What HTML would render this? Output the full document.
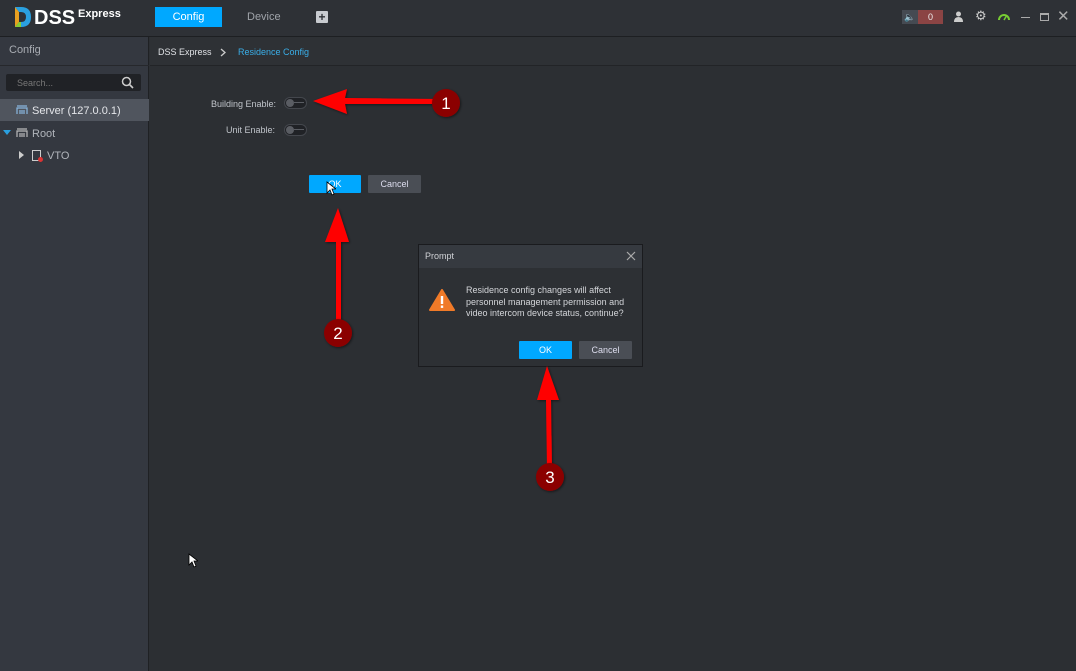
<!DOCTYPE html>
<html><head><style>
*{margin:0;padding:0;box-sizing:border-box}
body{width:1076px;height:671px;overflow:hidden;background:#2c2f33;font-family:"Liberation Sans",sans-serif;position:relative;color:#c8cbd0}
.abs{position:absolute}
#top{left:0;top:0;width:1076px;height:37px;background:#2e3136;border-bottom:1px solid #1d1f22}
#side{left:0;top:37px;width:149px;height:634px;background:#343840;border-right:1px solid #1f2124}
#bc{left:150px;top:37px;width:926px;height:29px;background:#2e3135;border-bottom:1px solid #222427}
.btn{position:absolute;height:18px;font-size:9px;text-align:center;line-height:18px;border-radius:1px}
.ok{background:#00a8ff;color:#fff}
.cn{background:#4a4e55;color:#dde}
.tog{position:absolute;width:23px;height:12px;border-radius:6px;background:#202226;border:1px solid #44474d}
.tog:before{content:"";position:absolute;left:1px;top:1px;width:8px;height:8px;border-radius:50%;background:#5a5d63}
.tog:after{content:"";position:absolute;left:9px;top:4px;width:10px;height:1px;background:#5a5d63}
</style></head><body>
<div id="top" class="abs">
  <svg class="abs" style="left:13px;top:6px" width="20" height="22" viewBox="0 0 20 22"><path d="M2 1 L8 1 Q18 1 18 11 Q18 21 8 21 L2 21 L6 16 L8 16 Q13 16 13 11 Q13 6 8 6 L6 6Z" fill="#2aa0e0"/><path d="M2 1 L6 6 L6 16 L2 21Z" fill="#e8a020"/><path d="M2 21 L6 16 L8 16 L8 21Z" fill="#8c3"/></svg>
  <div class="abs" style="left:34px;top:7px;font-size:20px;font-weight:bold;color:#fff">DSS</div>
  <div class="abs" style="left:78px;top:8px;font-size:11px;font-weight:bold;color:#fff">Express</div>
  <div class="abs" style="left:155px;top:7px;width:67px;height:20px;background:#00a8ff;color:#fff;font-size:11px;text-align:center;line-height:20px">Config</div>
  <div class="abs" style="left:247px;top:11px;font-size:11px;color:#a0a4aa">Device</div>
  <div class="abs" style="left:316px;top:11px;width:12px;height:12px;background:#c8cbd0;border-radius:1px;color:#2e3136;font-size:12px;line-height:12px;text-align:center;font-weight:bold">+</div>
  <div class="abs" style="left:902px;top:10px;width:16px;height:14px;background:#454a52;color:#ccc;font-size:9px;text-align:center;line-height:14px">🔈</div>
  <div class="abs" style="left:918px;top:10px;width:25px;height:14px;background:#8b4444;color:#eee;font-size:9px;text-align:center;line-height:14px">0</div>
  <svg class="abs" style="left:953px;top:11px" width="11" height="11"><circle cx="5.5" cy="3" r="2.5" fill="#ccc"/><path d="M1 11 Q1 6 5.5 6 Q10 6 10 11Z" fill="#ccc"/></svg>
  <div class="abs" style="left:975px;top:8px;font-size:13px;color:#ccc">⚙</div>
  <svg class="abs" style="left:998px;top:12px" width="12" height="9"><path d="M1 8 A5 5 0 0 1 11 8" stroke="#7c3" stroke-width="2" fill="none"/><path d="M6 8 L9 3" stroke="#7c3" stroke-width="1.5"/></svg>
  <div class="abs" style="left:1021px;top:17px;width:9px;height:1px;background:#aaa"></div>
  <div class="abs" style="left:1040px;top:13px;width:9px;height:8px;border:1px solid #aaa;border-top-width:2px"></div>
  <div class="abs" style="left:1057px;top:7px;font-size:15px;color:#aaa">✕</div>
</div>
<div id="side" class="abs">
  <div class="abs" style="left:9px;top:7px;font-size:11px;color:#a8acb2">Config</div>
  <div class="abs" style="left:0;top:28px;width:149px;height:1px;background:#26282c"></div>
  <div class="abs" style="left:6px;top:37px;width:135px;height:17px;background:#202226;border-radius:2px"></div>
  <div class="abs" style="left:17px;top:41px;font-size:9px;color:#777">Search...</div>
  <svg class="abs" style="left:121px;top:39px" width="13" height="13"><circle cx="5.5" cy="5.5" r="4" stroke="#ccc" stroke-width="1.5" fill="none"/><path d="M8.5 8.5 L12 12" stroke="#ccc" stroke-width="1.6"/></svg>
  <div class="abs" style="left:0;top:62px;width:149px;height:22px;background:#50555e"></div>
  <svg class="abs" style="left:16px;top:68px" width="12" height="10"><path d="M1 9 V3 H11 V9 M1 1 H11 M4 5 V9 M6 5 V9 M8 5 V9" stroke="#8ab8e0" stroke-width="1.2" fill="none"/></svg>
  <div class="abs" style="left:32px;top:68px;font-size:11px;color:#e4e6ea">Server (127.0.0.1)</div>
  <div class="abs" style="left:3px;top:93px;width:0;height:0;border-left:4px solid transparent;border-right:4px solid transparent;border-top:5px solid #2aa0e0"></div>
  <svg class="abs" style="left:16px;top:91px" width="12" height="10"><path d="M1 9 V3 H11 V9 M1 1 H11 M4 5 V9 M6 5 V9 M8 5 V9" stroke="#bbb" stroke-width="1.2" fill="none"/></svg>
  <div class="abs" style="left:32px;top:91px;font-size:11px;color:#b0b4ba">Root</div>
  <div class="abs" style="left:19px;top:114px;width:0;height:0;border-top:4px solid transparent;border-bottom:4px solid transparent;border-left:5px solid #ccc"></div>
  <div class="abs" style="left:32px;top:113px;width:9px;height:11px;border:1px solid #ccc"></div>
  <div class="abs" style="left:38px;top:120px;width:5px;height:5px;border-radius:50%;background:#d33"></div>
  <div class="abs" style="left:47px;top:113px;font-size:11px;color:#b0b4ba">VTO</div>
</div>
<div id="bc" class="abs">
  <div class="abs" style="left:8px;top:10px;font-size:9px;color:#e0e2e6">DSS Express</div>
  <svg class="abs" style="left:70px;top:11px" width="6" height="9"><path d="M1 1 L5 4.5 L1 8" stroke="#ccc" stroke-width="1.3" fill="none"/></svg>
  <div class="abs" style="left:88px;top:10px;font-size:9px;color:#3aaee8">Residence Config</div>
</div>
<div class="abs" style="left:211px;top:99px;font-size:9px;color:#c0c4ca">Building Enable:</div>
<div class="tog" style="left:284px;top:97px"></div>
<div class="abs" style="left:226px;top:125px;font-size:9px;color:#c0c4ca">Unit Enable:</div>
<div class="tog" style="left:284px;top:124px"></div>
<div class="btn ok" style="left:309px;top:175px;width:52px">OK</div>
<div class="btn cn" style="left:368px;top:175px;width:53px">Cancel</div>
<div class="abs" style="left:418px;top:244px;width:225px;height:123px;background:#2d3034;border:1px solid #1a1b1e"></div>
<div class="abs" style="left:419px;top:245px;width:223px;height:23px;background:#363a40"></div>
<div class="abs" style="left:425px;top:251px;font-size:9px;color:#d0d2d6">Prompt</div>
<svg class="abs" style="left:626px;top:251px" width="10" height="10"><path d="M1 1 L9 9 M9 1 L1 9" stroke="#aaa" stroke-width="1.2"/></svg>
<svg class="abs" style="left:429px;top:289px" width="26" height="22"><path d="M13 1 L25 21 L1 21Z" fill="#f07a28" stroke="#f07a28" stroke-linejoin="round" stroke-width="2"/><rect x="11.8" y="7" width="2.4" height="8" fill="#fff"/><rect x="11.8" y="16.5" width="2.4" height="2.4" fill="#fff"/></svg>
<div class="abs" style="left:466px;top:285px;font-size:9px;line-height:11.5px;color:#d4d6da;width:170px">Residence config changes will affect personnel management permission and video intercom device status, continue?</div>
<div class="btn ok" style="left:519px;top:341px;width:53px">OK</div>
<div class="btn cn" style="left:579px;top:341px;width:53px">Cancel</div>
<svg class="abs" style="left:326px;top:181px" width="10" height="15"><path d="M1 1 L1 12 L4 9 L6 14 L8 13 L6 8 L10 8Z" fill="#fff" stroke="#000" stroke-width="0.8"/></svg>
<svg class="abs" style="left:188px;top:553px" width="10" height="15"><path d="M1 1 L1 12 L4 9 L6 14 L8 13 L6 8 L10 8Z" fill="#fff" stroke="#000" stroke-width="0.8"/></svg>
<svg class="abs" style="left:0;top:0" width="1076" height="671">
<defs><filter id="s"><feDropShadow dx="1" dy="1" stdDeviation="1.2" flood-color="#000" flood-opacity="0.5"/></filter></defs>
<g fill="#ff0000" filter="url(#s)">
<path d="M313 101 L347 89 L345 98 L440 99 L440 104 L345 104 L347 114Z"/>
<path d="M338 208 L349 242 L341 242 L341 326 L336 326 L336 242 L325 242Z"/>
<path d="M547 366 L559 400 L551 400 L552 470 L547 470 L546 400 L537 400Z"/>
</g>
<g fill="#8b0000" filter="url(#s)">
<circle cx="446" cy="103" r="14"/><circle cx="338" cy="333" r="14"/><circle cx="550" cy="477" r="14"/>
</g>
<g fill="#fff" font-family="Liberation Sans" font-size="17" text-anchor="middle">
<text x="446" y="109">1</text><text x="338" y="339">2</text><text x="550" y="483">3</text>
</g>
</svg>
</body></html>
